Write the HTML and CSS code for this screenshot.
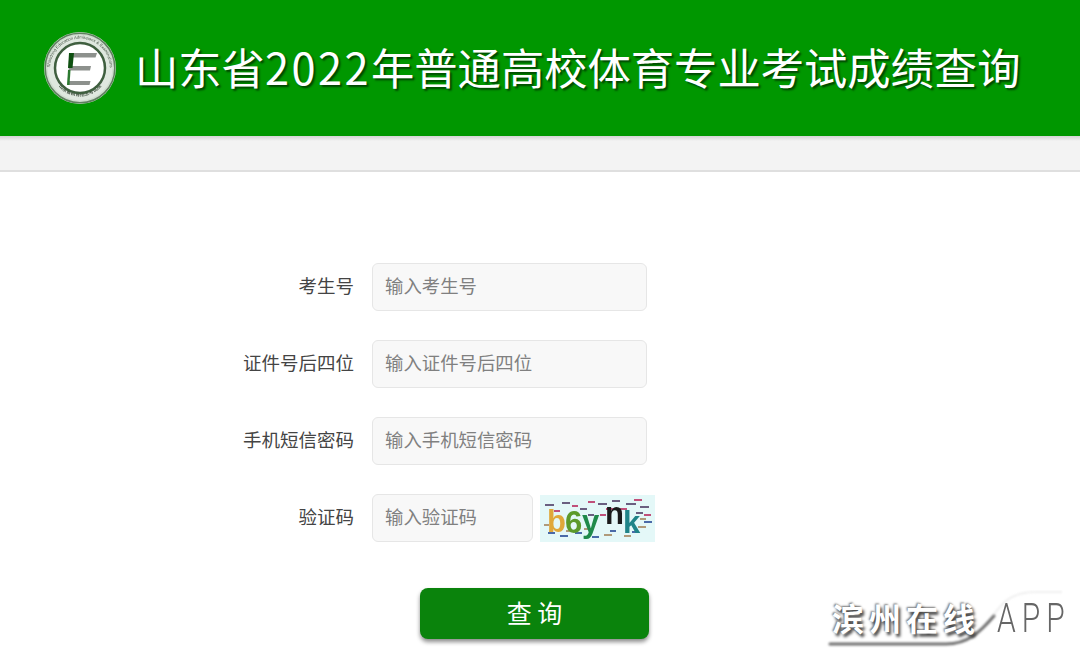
FILE: index.html
```html
<!DOCTYPE html>
<html lang="zh-CN">
<head>
    <meta charset="UTF-8">
    <meta name="viewport" content="width=device-width, initial-scale=1.0">
    <title>山东省2022年普通高校体育专业考试成绩查询</title>
    <link rel="stylesheet" href="styles.css">
</head>
<body>

    <div class="header">
        <svg class="logo" viewBox="0 0 72 72">
            <defs>
                <path id="ringTop" d="M7.500 46 A30 30 0 1 1 64.500 46"/>
                <path id="ringBottom" d="M13 52 A28 28 0 0 0 59 52"/>
            </defs>
            <circle cx="36" cy="36" r="36" fill="#cfdccf"/>
            <circle cx="36" cy="36" r="34.800" fill="none" stroke="#5f7f5f" stroke-width="1.500"/>
            <circle cx="36" cy="36" r="32.500" fill="#dfe8df"/>
            <text class="logo-text"><textPath href="#ringTop" startOffset="50%" text-anchor="middle">Shandong Education Admissions &amp; Examinations</textPath></text>
            <text class="logo-text logo-text-cn"><textPath href="#ringBottom" startOffset="50%" text-anchor="middle">山东省教育招生考试院</textPath></text>
            <circle cx="36" cy="36" r="25" fill="#fff" stroke="#3f5f3f" stroke-width="2.500"/>
            <path d="M26 21h27l-1.500 4.500h-26zM25 34h22l-1 4.500h-21.500zM24 49h22.500l-1 4h-22z" fill="#8d918d"/>
            <path d="M25 21h5l-1.500 15h-4.500z" fill="#0d4f10"/>
            <path d="M24 38h2.500l-1 15h-2.500z" fill="#2c7a30"/>
        </svg>
        <h1>山东省<span class="digits">2022</span>年普通高校体育专业考试成绩查询</h1>
    </div>
    <div class="strip"></div>

    <form class="form">
        <label>考生号</label>
        <input type="text" placeholder="输入考生号">

        <label>证件号后四位</label>
        <input type="text" placeholder="输入证件号后四位">

        <label>手机短信密码</label>
        <input type="text" placeholder="输入手机短信密码">

        <label>验证码</label>
        <div class="code-row">
            <input type="text" placeholder="输入验证码">
            <svg class="captcha" viewBox="0 0 115 47">
                <rect width="115" height="47" fill="#e4f8f8"/>
                <g stroke-width="2">
                    <path d="M5 10h9M22 8h8M40 14h7M58 9h9M72 6h8M86 9h10M100 12h9M48 20h6M96 18h7" stroke="#6a5f80"/>
                    <path d="M14 16h6M32 11h6M48 7h7M66 14h8M80 14h7M94 5h8M104 20h7M60 20h6" stroke="#c0507a"/>
                    <path d="M8 38h7M20 41h8M35 38h7M52 42h7M70 36h6M92 37h7M104 27h8" stroke="#4a6aa8"/>
                    <path d="M26 36h6M44 34h7M64 40h8M84 41h7M98 32h8M4 30h5M100 24h6" stroke="#b09a7a"/>
                </g>
                <text class="cap cap-b" x="7" y="37">b</text>
                <text class="cap cap-6" x="25" y="38">6</text>
                <text class="cap cap-y" x="42" y="37">y</text>
                <text class="cap cap-n" x="65" y="29">n</text>
                <text class="cap cap-k" x="83" y="38">k</text>
            </svg>
        </div>

        <div></div>
        <div class="submit-row">
            <button type="button" class="submit">查 询</button>
        </div>
    </form>

    <div class="watermark">
        <svg class="swoosh" viewBox="0 0 254 60">
            <path d="M4 52 H128 C150 52 158 36 172 20 C182 8 190 3 206 3 H238 C248 3 252 8 252 16 V36 C252 46 246 52 238 52 Z" fill="#fff"/>
            <path class="swoosh-top" d="M160 34 C168 24 176 12 186 7 C194 3 200 2 210 2 H236" fill="none"/>
            <path class="swoosh-line" d="M4 54 H120 C142 54 154 42 168 26" fill="none"/>
        </svg>
        <span class="wm-name">滨州在线</span>
        <span class="wm-app">APP</span>
    </div>

</body>
</html>
```

FILE: styles.css
```css
*{
    box-sizing: border-box;
}
html,body{
    height: 100%;
    overflow: hidden;
}
body{
    margin: 0;
    background-color: #fff;
    font-family: "Liberation Sans", "Noto Sans CJK SC", sans-serif;
    position: relative;
}

.header{
    height: 136px;
    background-color: #009700;
    display: flex;
    align-items: center;
    padding-left: 44px;
}
.logo{
    width: 72px;
    height: 72px;
    flex-shrink: 0;
    filter: blur(.4px);
}
.logo-text{
    font-size: 4.200px;
    fill: #3f4f3f;
    font-family: "Liberation Sans", "Noto Sans CJK SC", sans-serif;
}
.logo-text-cn{
    font-size: 4.800px;
    font-weight: 700;
}
.header h1{
    margin: 0 0 0 19px;
    padding-bottom: 4px;
    font-size: 43.300px;
    font-weight: 400;
    color: #fff;
    white-space: nowrap;
    font-family: "Noto Sans CJK SC", sans-serif;
    text-shadow: 2px 2px 2px rgba(0,0,0,.55);
}
.digits{
    letter-spacing: 2.500px;
}

.strip{
    height: 36px;
    background: linear-gradient(#d4d4d4, #f3f3f3 5px);
    border-bottom: 2px solid #dfdfdf;
}

.form{
    display: grid;
    grid-template-columns: 354px 275px;
    column-gap: 18px;
    row-gap: 29px;
    align-items: center;
    padding-top: 91px;
}
.form label{
    text-align: right;
    font-size: 18.500px;
    color: #444;
    padding-bottom: 4px;
    font-family: "Noto Sans CJK SC", sans-serif;
}
.form input{
    width: 100%;
    height: 48px;
    padding: 0 12px 5px;
    background-color: #f8f8f8;
    border: 1px solid #e6e6e6;
    border-radius: 6px;
    font-size: 18.400px;
    font-family: "Noto Sans CJK SC", sans-serif;
    outline: none;
}
.form input::placeholder{
    color: #808080;
    opacity: 1;
}

.code-row{
    display: flex;
    align-items: center;
    gap: 7px;
    width: 283px;
}
.code-row input{
    width: 161px;
    flex-shrink: 0;
}
.captcha{
    width: 115px;
    height: 47px;
    flex-shrink: 0;
    filter: blur(.5px);
}
.cap{
    font-family: "Liberation Sans", sans-serif;
    font-size: 31px;
    font-weight: 700;
}
.cap-b{ fill: #e0a83a; }
.cap-6{ fill: #5c9a2a; }
.cap-y{ fill: #1f8a4a; }
.cap-n{ fill: #1a1a1a; }
.cap-k{ fill: #1f8488; }

.submit-row{
    padding-left: 48px;
    margin-top: 17px;
}
.submit{
    display: block;
    width: 229px;
    height: 51px;
    padding: 0 0 4px;
    border: 0;
    border-radius: 8px;
    background-color: #0a830c;
    color: #fff;
    font-size: 25px;
    font-family: "Noto Sans CJK SC", sans-serif;
    box-shadow: 0 3px 4px rgba(0,0,0,.45);
}

.watermark{
    position: absolute;
    right: 0;
    top: 590px;
    width: 254px;
    height: 60px;
    color: #fff;
}
.swoosh{
    position: absolute;
    left: 0;
    top: 0;
    width: 254px;
    height: 60px;
}
.swoosh-line{
    stroke: #707070;
    stroke-width: 3px;
    stroke-linecap: round;
    filter: blur(1px);
}
.swoosh-top{
    stroke: #ececec;
    stroke-width: 1.500px;
    filter: blur(1px);
}
.wm-name{
    position: absolute;
    left: 6px;
    top: 4px;
    font-size: 32px;
    line-height: 46px;
    font-weight: 700;
    letter-spacing: 5px;
    white-space: nowrap;
    font-family: "Noto Sans CJK SC", sans-serif;
    text-shadow: 2px 3px 3px #444, -1px -1px 2px #777;
}
.wm-app{
    position: absolute;
    left: 171px;
    top: 5px;
    font-size: 30px;
    font-weight: 300;
    line-height: 46px;
    letter-spacing: 6px;
    color: #666;
    font-family: Roboto, sans-serif;
    transform: scaleY(1.380);
}
```
